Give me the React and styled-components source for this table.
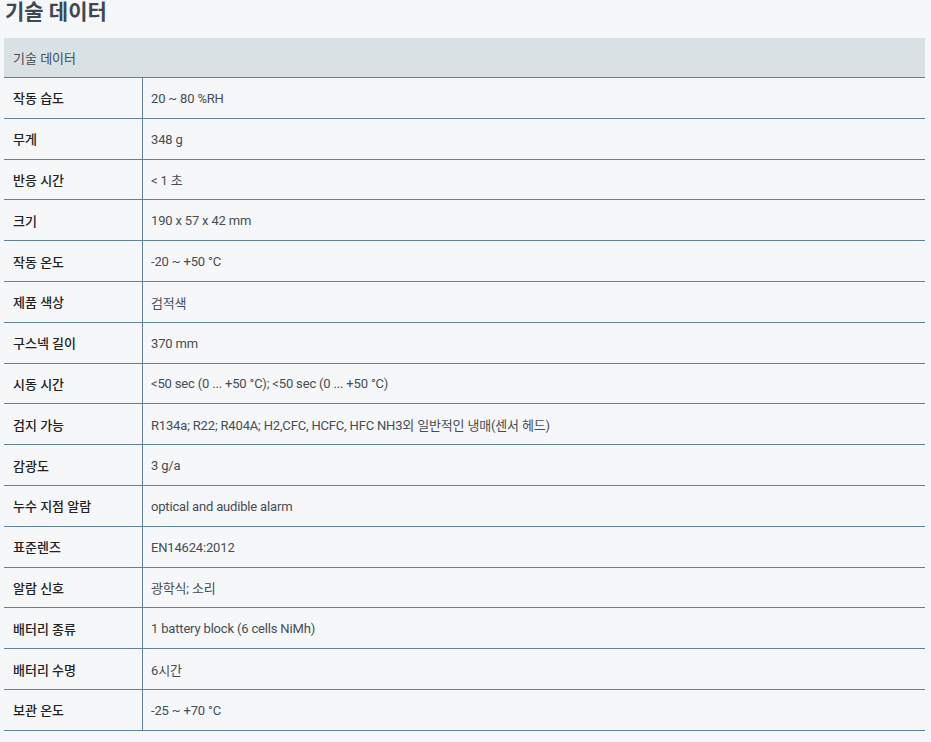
import React from "react";
import styled, { createGlobalStyle } from "styled-components";

const GlobalStyle = createGlobalStyle`
  body {
    margin: 0;
    background: #f5f7f9;
    font-family: Roboto, "Noto Sans CJK KR", sans-serif;
  }
`;

const Page = styled.div`
  padding: 0 6px 0 4px;
`;

const Title = styled.h2`
  margin: 0;
  padding: 0 0 0 1px;
  height: 38px;
  line-height: 25px;
  font-size: 21px;
  font-weight: 700;
  color: #3d4852;
`;

const Table = styled.table`
  width: 100%;
  border-collapse: collapse;
  font-size: 13px;
`;

const HeadCell = styled.th`
  background: #d9e1e4;
  text-align: left;
  font-weight: 400;
  color: #444b52;
  height: 39px;
  padding: 0 9px;
  border-bottom: 1px solid #5f8394;
`;

const Row = styled.tr`
  height: 40.8px;
  border-bottom: 1px solid #5f8394;
`;

const Label = styled.td`
  width: 120px;
  padding: 0 9px;
  font-weight: 500;
  color: #222;
  border-right: 1px solid #5f8394;
`;

const Value = styled.td`
  padding: 1px 8px 0;
  color: #474d54;
  letter-spacing: -0.17px;
`;

const rows = [
  ["작동 습도", "20 ~ 80 %RH"],
  ["무게", "348 g"],
  ["반응 시간", "< 1 초"],
  ["크기", "190 x 57 x 42 mm"],
  ["작동 온도", "-20 ~ +50 °C"],
  ["제품 색상", "검적색"],
  ["구스넥 길이", "370 mm"],
  ["시동 시간", "<50 sec (0 ... +50 °C); <50 sec (0 ... +50 °C)"],
  ["검지 가능", "R134a; R22; R404A; H2,CFC, HCFC, HFC NH3외 일반적인 냉매(센서 헤드)"],
  ["감광도", "3 g/a"],
  ["누수 지점 알람", "optical and audible alarm"],
  ["표준렌즈", "EN14624:2012"],
  ["알람 신호", "광학식; 소리"],
  ["배터리 종류", "1 battery block (6 cells NiMh)"],
  ["배터리 수명", "6시간"],
  ["보관 온도", "-25 ~ +70 °C"],
];

export default function App() {
  return (
    <Page>
      <GlobalStyle />
      <Title>기술 데이터</Title>
      <Table>
        <thead>
          <tr>
            <HeadCell colSpan={2}>기술 데이터</HeadCell>
          </tr>
        </thead>
        <tbody>
          {rows.map(([k, v]) => (
            <Row key={k}>
              <Label>{k}</Label>
              <Value>{v}</Value>
            </Row>
          ))}
        </tbody>
      </Table>
    </Page>
  );
}
